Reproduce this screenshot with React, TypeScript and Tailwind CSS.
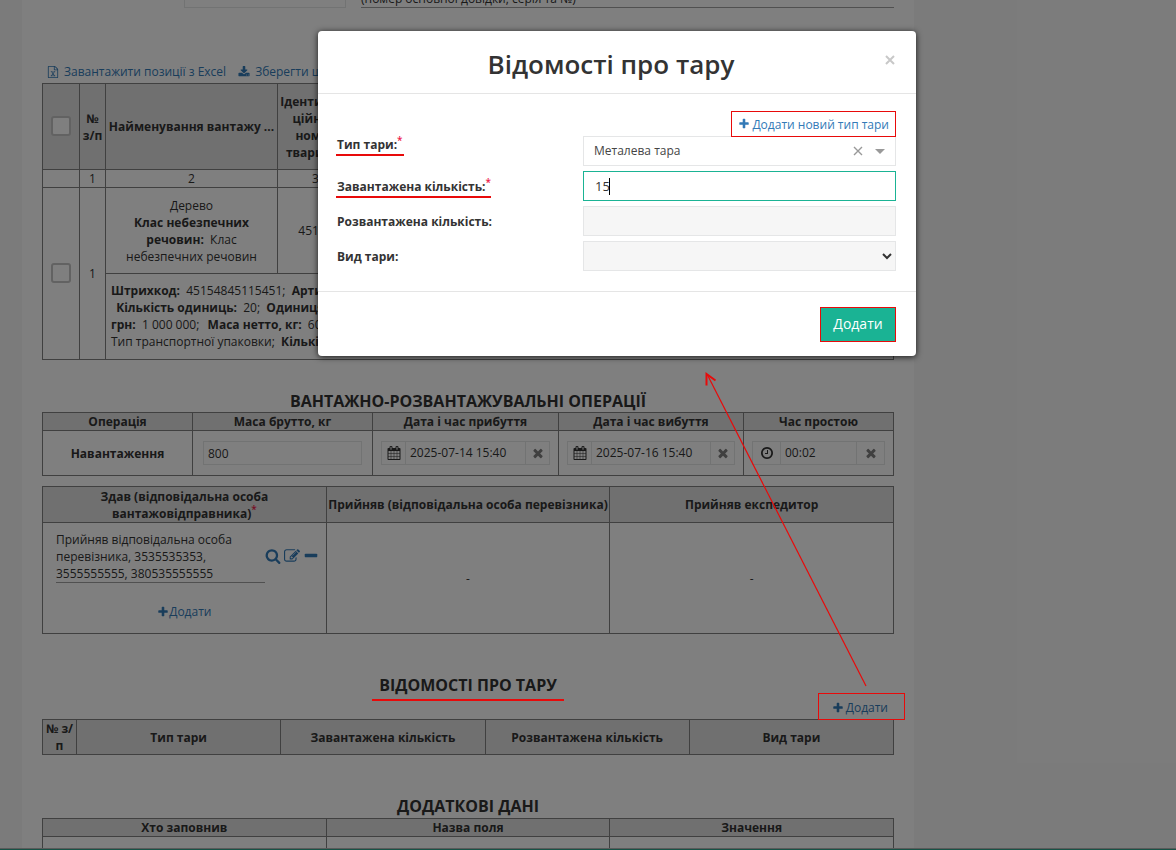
import React from "react";

const ICONS = {
  plus: "M1600 736v192q0 40-28 68t-68 28h-416v416q0 40-28 68t-68 28h-192q-40 0-68-28t-28-68v-416h-416q-40 0-68-28t-28-68v-192q0-40 28-68t68-28h416v-416q0-40 28-68t68-28h192q40 0 68 28t28 68v416h416q40 0 68 28t28 68z",
  minus: "M1600 736v192q0 40-28 68t-68 28h-1216q-40 0-68-28t-28-68v-192q0-40 28-68t68-28h1216q40 0 68 28t28 68z",
  search: "M1216 832q0-185-131.5-316.5t-316.5-131.5-316.5 131.5-131.5 316.5 131.5 316.5 316.5 131.5 316.5-131.5 131.5-316.5zm512 832q0 52-38 90t-90 38q-54 0-90-38l-343-342q-179 124-399 124-143 0-273.5-55.5t-225-150-150-225-55.5-273.5 55.5-273.5 150-225 225-150 273.5-55.5 273.5 55.5 225 150 150 225 55.5 273.5q0 220-124 399l343 343q37 37 37 90z",
  edit: "M888 1184l116-116-152-152-116 116v56h96v96h56zm440-720q-16-16-33 1l-350 350q-17 17-1 33t33-1l350-350q17-17 1-33zm80 594v190q0 119-84.5 203.5t-203.5 84.5h-832q-119 0-203.5-84.5t-84.5-203.5v-832q0-119 84.5-203.5t203.5-84.5h832q63 0 117 25 15 7 18 23 3 17-9 29l-49 49q-14 14-32 8-23-6-45-6h-832q-66 0-113 47t-47 113v832q0 66 47 113t113 47h832q66 0 113-47t47-113v-126q0-13 9-22l64-64q15-15 35-7t20 29zm-96-738l288 288-672 672h-288v-288zm444 132l-92 92-288-288 92-92q28-28 68-28t68 28l152 152q28 28 28 68t-28 68z",
  times: "M1490 1322q0 40-28 68l-136 136q-28 28-68 28t-68-28l-294-294-294 294q-28 28-68 28t-68-28l-136-136q-28-28-28-68t28-68l294-294-294-294q-28-28-28-68t28-68l136-136q28-28 68-28t68 28l294 294 294-294q28-28 68-28t68 28l136 136q28 28 28 68t-28 68l-294 294 294 294q28 28 28 68z",
  clock: "M1024 544v448q0 14-9 23t-23 9h-320q-14 0-23-9t-9-23v-64q0-14 9-23t23-9h224v-352q0-14 9-23t23-9h64q14 0 23 9t9 23zm416 352q0-148-73-273t-198-198-273-73-273 73-198 198-73 273 73 273 198 198 273 73 273-73 198-198 73-273zm224 0q0 209-103 385.5t-279.5 279.5-385.5 103-385.5-103-279.5-279.5-103-385.5 103-385.5 279.5-279.5 385.5-103 385.5 103 279.5 279.5 103 385.5z",
  calendar: "M192 1664h288v-288h-288v288zm352 0h320v-288h-320v288zm-352-352h288v-320h-288v320zm352 0h320v-320h-320v320zm-352-384h288v-288h-288v288zm736 736h320v-288h-320v288zm-384-736h320v-288h-320v288zm768 736h288v-288h-288v288zm-384-352h320v-320h-320v320zm-352-864v-288q0-13-9.5-22.5t-22.5-9.5h-64q-13 0-22.5 9.5t-9.5 22.5v288q0 13 9.5 22.5t22.5 9.5h64q13 0 22.5-9.5t9.5-22.5zm736 864h288v-320h-288v320zm-384-384h320v-288h-320v288zm384 0h288v-288h-288v288zm32-480v-288q0-13-9.5-22.5t-22.5-9.5h-64q-13 0-22.5 9.5t-9.5 22.5v288q0 13 9.5 22.5t22.5 9.5h64q13 0 22.5-9.5t9.5-22.5zm384-64v1280q0 52-38 90t-90 38h-1408q-52 0-90-38t-38-90v-1280q0-52 38-90t90-38h128v-96q0-66 47-113t113-47h64q66 0 113 47t47 113v96h384v-96q0-66 47-113t113-47h64q66 0 113 47t47 113v96h128q52 0 90 38t38 90z",
  download: "M1344 1344q0-26-19-45t-45-19-45 19-19 45 19 45 45 19 45-19 19-45zm256 0q0-26-19-45t-45-19-45 19-19 45 19 45 45 19 45-19 19-45zm128-224v320q0 40-28 68t-68 28h-1472q-40 0-68-28t-28-68v-320q0-40 28-68t68-28h465l135 136q58 56 136 56t136-56l136-136h464q40 0 68 28t28 68zm-325-569q17 41-14 70l-448 448q-18 19-45 19t-45-19l-448-448q-31-29-14-70 17-39 59-39h256v-448q0-26 19-45t45-19h256q26 0 45 19t19 45v448h256q42 0 59 39z",
  excel: "M1596 380q28 28 48 76t20 88v1152q0 40-28 68t-68 28h-1344q-40 0-68-28t-28-68v-1600q0-40 28-68t68-28h896q40 0 88 20t76 48zm-444-244v376h376q-10-29-22-41l-313-313q-12-12-41-22zm384 1528v-1024h-416q-40 0-68-28t-28-68v-416h-768v1536h1280zm-979-234v106h281v-106h-75l103-161q5-7 10-16.5t7.5-13.5 3.5-4h2q1 4 5 10 2 4 4.5 7.5t6 8 6.5 8.5l107 161h-76v106h291v-106h-68l-192-273 195-282h67v-107h-279v107h74l-103 159q-4 7-10 16.5t-9 13.5l-2 3h-2q-1-4-5-10-6-11-17-23l-106-159h76v-107h-290v107h68l189 272-194 283h-68z",
};

function Icon({ name, className }: { name: keyof typeof ICONS; className: string }) {
  return (
    <svg viewBox="0 0 1792 1792" fill="currentColor" aria-hidden="true" className={`shrink-0 ${className}`}>
      <path d={ICONS[name]} />
    </svg>
  );
}

const Star = () => <sup className="relative -top-[5px] align-baseline text-[10px] leading-none font-semibold text-[#ed1b4b]">*</sup>;

const cell = "border border-[#808080] p-0";
const head = "border border-[#808080] bg-[#e0e0e0] p-0 font-bold";

function PickerInput({ label, value, icon }: { label: string; value: string; icon: "calendar" | "clock" }) {
  return (
    <div className="ml-2 mr-2 flex h-6 border border-[#e5e6e7]">
      <span className={`flex items-center justify-center border-r border-[#e5e6e7] ${icon === "clock" ? "w-7" : "w-6"}`}>
        <Icon name={icon} className="size-[14px]" />
      </span>
      <input aria-label={label} defaultValue={value} className="min-w-0 flex-1 bg-transparent px-1 text-left text-xs outline-none" />
      <button type="button" aria-label={`Очистити: ${label}`} className={`flex items-center justify-center border-l border-[#e5e6e7] text-[#808080] ${icon === "clock" ? "w-7" : "w-6"}`}>
        <Icon name="times" className="size-[14px]" />
      </button>
    </div>
  );
}

function CargoTable() {
  return (
    <table className="w-full table-fixed border-collapse text-center">
      <colgroup>
        <col className="w-[37px]" />
        <col className="w-[26px]" />
        <col className="w-[172px]" />
        <col className="w-[76px]" />
        <col />
      </colgroup>
      <thead>
        <tr className="h-[86px]">
          <th className={`${head} pb-[2px]`}>
            <input type="checkbox" aria-label="Вибрати всі" className="block mx-auto size-5 appearance-none rounded-[3px] border-2 border-[#c4c4c4] bg-white" />
          </th>
          <th className={head}>№<br />з/п</th>
          <th className={head}>Найменування вантажу ...</th>
          <th className={head}>Ідентифіка<br />ційний<br />номер<br />тварини/</th>
          <th className={head} />
        </tr>
        <tr className="h-[18px]">
          <td className={cell} />
          <td className={cell}>1</td>
          <td className={cell}>2</td>
          <td className={cell}>3</td>
          <td className={cell} />
        </tr>
      </thead>
      <tbody>
        <tr className="h-[86px]">
          <td rowSpan={2} className={`${cell} pb-[2px]`}>
            <input type="checkbox" aria-label="Вибрати позицію 1" className="block mx-auto size-5 appearance-none rounded-[3px] border-2 border-[#c4c4c4] bg-white" />
          </td>
          <td rowSpan={2} className={cell}>1</td>
          <td className={`${cell} px-4`}>
            Дерево<br />
            <b>Клас небезпечних речовин:</b>&nbsp; Клас небезпечних речовин
          </td>
          <td className={cell}>45154</td>
          <td className={cell} />
        </tr>
        <tr className="h-[86px]">
          <td colSpan={3} className={`${cell} overflow-hidden pb-[2px] pl-[5px] text-left whitespace-nowrap`}>
            <b>Штрихкод:</b>&nbsp; 45154845115451;&nbsp; <b>Артикул:</b><br />
            &nbsp;<b className="ml-[2px]">Кількість одиниць:</b>&nbsp; 20;&nbsp; <b>Одиниця виміру:</b><br />
            <b>грн:</b>&nbsp; 1 000 000;&nbsp; <b className="ml-[2px]">Маса нетто, кг:</b>&nbsp; 600;<br />
            Тип транспортної упаковки;&nbsp; <b>Кількість місць:</b>
          </td>
        </tr>
      </tbody>
    </table>
  );
}

function OperationsTable() {
  return (
    <table className="w-full table-fixed border-collapse text-center">
      <colgroup>
        <col className="w-[150px]" />
        <col className="w-[180px]" />
        <col className="w-[186px]" />
        <col className="w-[185px]" />
        <col />
      </colgroup>
      <thead>
        <tr className="h-[18px]">
          <th className={head}>Операція</th>
          <th className={head}>Маса брутто, кг</th>
          <th className={head}>Дата і час прибуття</th>
          <th className={head}>Дата і час вибуття</th>
          <th className={head}>Час простою</th>
        </tr>
      </thead>
      <tbody>
        <tr className="h-[45px]">
          <th className={cell}>Навантаження</th>
          <td className={`${cell} px-[10px]`}>
            <input aria-label="Маса брутто, кг" defaultValue="800" className="block h-6 w-full border border-[#e5e6e7] bg-transparent px-1 text-xs" />
          </td>
          <td className={cell}><PickerInput label="Дата і час прибуття" value="2025-07-14 15:40" icon="calendar" /></td>
          <td className={cell}><PickerInput label="Дата і час вибуття" value="2025-07-16 15:40" icon="calendar" /></td>
          <td className={cell}><PickerInput label="Час простою" value="00:02" icon="clock" /></td>
        </tr>
      </tbody>
    </table>
  );
}

function PersonsTable() {
  return (
    <table className="mt-[10px] w-full table-fixed border-collapse text-center">
      <thead>
        <tr className="h-[36px]">
          <th className={`${head} px-10`}>Здав (відповідальна особа вантажовідправника)<Star /></th>
          <th className={`${head} whitespace-nowrap`}>Прийняв (відповідальна особа перевізника)</th>
          <th className={head}>Прийняв експедитор</th>
        </tr>
      </thead>
      <tbody>
        <tr className="h-[111px]">
          <td className={`${cell} align-top`}>
            <div className="flex items-center pt-2 pl-[13px] text-left">
              <p className="w-[209px] shrink-0 border-b border-[#a0a0a0]">
                Прийняв відповідальна особа<br />перевізника, 3535535353,<br />3555555555, 380535555555
              </p>
              <span className="flex items-center gap-[3px] pb-[2px] text-[#337ab7]">
                <button type="button" aria-label="Переглянути"><Icon name="search" className="size-4" /></button>
                <button type="button" aria-label="Редагувати"><Icon name="edit" className="size-4" /></button>
                <button type="button" aria-label="Видалити"><Icon name="minus" className="size-4" /></button>
              </span>
            </div>
            <a href="#person" className="mt-5 flex items-center justify-center text-[#337ab7]">
              <Icon name="plus" className="size-3" />Додати
            </a>
          </td>
          <td className={cell}>-</td>
          <td className={cell}>-</td>
        </tr>
      </tbody>
    </table>
  );
}

function Modal() {
  const field = "block h-[30px] w-full border border-[#e5e6e7] text-xs";
  return (
    <div role="dialog" aria-modal="true" aria-labelledby="modal-title" className="w-full max-w-[598px] rounded-[4px] bg-white shadow-[0_1px_6px_rgba(0,0,0,0.8)]">
      <header className="flex h-[63px] items-start border-b border-[#e5e5e5] pt-[15px] pr-5 pl-5">
        <h1 id="modal-title" className="flex-1 text-center text-[26px] leading-9 font-semibold">Відомості про тару</h1>
        <button type="button" aria-label="Закрити" className="mt-2 text-[#c8c8c8]">
          <svg viewBox="0 0 12 12" className="size-3" fill="none" stroke="currentColor" strokeWidth="2"><path d="M2 2l8 8M10 2l-8 8" /></svg>
        </button>
      </header>
      <form className="grid grid-cols-[minmax(0,1fr)_313px] gap-y-[5px] pt-[17px] pr-5 pb-5 pl-[19px]">
        <div className="flex items-end pb-[10px]">
          <label htmlFor="tare" className="-ml-px border-b-2 border-[#e80a0a] pr-px pl-px font-bold leading-[18px]">Тип тари:<Star /></label>
        </div>
        <div>
          <div className="flex justify-end">
            <a href="#new-type" className="relative z-10 flex h-[26px] items-center gap-[2px] border border-[#e80a0a] px-[6px] text-[#337ab7]">
              <Icon name="plus" className="size-3" />Додати новий тип тари
            </a>
          </div>
          <div className="-mt-px flex h-[30px] items-center border border-[#e5e6e7] pr-[10px] text-[#444]">
            <input id="tare" defaultValue="Металева тара" className="min-w-0 flex-1 bg-transparent pl-[10px] text-xs outline-none" />
            <button type="button" aria-label="Очистити" className="text-[#999]">
              <svg viewBox="0 0 10 10" className="size-[10px]" fill="none" stroke="currentColor" strokeWidth="1.4"><path d="M1 1l8 8M9 1l-8 8" /></svg>
            </button>
            <svg viewBox="0 0 10 5" className="ml-3 h-[5px] w-[10px] fill-[#999]" aria-hidden="true"><path d="M0 0h10l-5 5z" /></svg>
          </div>
        </div>
        <div className="flex items-end pb-[3px]">
          <label htmlFor="loaded" className="-ml-px border-b-2 border-[#e80a0a] pl-px font-bold leading-[18px]">Завантажена кількість:<Star /></label>
        </div>
        <div className="relative">
          <input id="loaded" defaultValue="15" className="block h-[30px] w-full border border-[#1ab394] pl-[11px] text-[13px] outline-none" />
          <span className="absolute top-[7px] left-[26px] h-[17px] w-px bg-black" />
        </div>
        <label htmlFor="unloaded" className="self-center font-bold">Розвантажена кількість:</label>
        <input id="unloaded" readOnly className={`${field} bg-[#f6f6f6]`} />
        <label htmlFor="kind" className="self-center font-bold">Вид тари:</label>
        <select id="kind" className={`${field} bg-[#f6f6f6]`}><option value="" /></select>
      </form>
      <footer className="flex justify-end border-t border-[#e5e5e5] px-5 pt-[15px] pb-[14px]">
        <button type="button" className="h-[35px] w-[76px] border border-[#e80a0a] bg-[#1ab394] pb-px text-sm font-medium text-white">Додати</button>
      </footer>
    </div>
  );
}

export default function App() {
  return (
    <div className="relative flex h-screen flex-col overflow-hidden bg-[#f7f7f7] font-['Open_Sans','Noto_Sans',sans-serif] text-xs leading-[17px] text-[#333]">
      <main className="min-h-0 flex-1 overflow-hidden pl-[22px]">
        <div className="min-h-full max-w-[892px] bg-white px-5">
          <div className="flex h-2 items-end overflow-hidden pl-[142px]">
            <input aria-label="Номер" className="h-7 w-[162px] shrink-0 border border-[#e5e6e7]" />
            <p className="ml-[15px] flex-1 border-b border-[#a0a0a0]">(номер основної довідки, серія та №)</p>
          </div>
          <div className="mt-[55px] flex h-5 gap-3 pl-[5px] text-[#337ab7]">
            <a href="#import" className="flex h-[17px] items-center gap-[5px]"><Icon name="excel" className="size-3" />Завантажити позиції з Excel</a>
            <a href="#export" className="flex h-[17px] items-center gap-[5px]"><Icon name="download" className="size-3" />Зберегти шаблон</a>
          </div>
          <CargoTable />
          <h2 className="mt-[31px] mb-px text-center text-base leading-5 font-bold">ВАНТАЖНО-РОЗВАНТАЖУВАЛЬНІ ОПЕРАЦІЇ</h2>
          <OperationsTable />
          <PersonsTable />
          <h2 className="mt-[41px] text-center text-base leading-5 font-bold">ВІДОМОСТІ ПРО ТАРУ</h2>
          <div className="flex h-6 items-end justify-end pr-[6px] pb-[3px]">
            <a href="#tare" className="flex items-center gap-[2px] text-[#337ab7]"><Icon name="plus" className="size-3" />Додати</a>
          </div>
          <table className="w-full table-fixed border-collapse text-center">
            <colgroup><col className="w-[34px]" /><col /><col /><col /><col /></colgroup>
            <thead>
              <tr className="h-[35px]">
                <th className={head}>№ з/<br />п</th>
                <th className={head}>Тип тари</th>
                <th className={head}>Завантажена кількість</th>
                <th className={head}>Розвантажена кількість</th>
                <th className={head}>Вид тари</th>
              </tr>
            </thead>
          </table>
          <h2 className="mt-[41px] mb-[2px] text-center text-base leading-5 font-bold">ДОДАТКОВІ ДАНІ</h2>
          <table className="w-full table-fixed border-collapse text-center">
            <thead>
              <tr className="h-[18px]">
                <th className={head}>Хто заповнив</th>
                <th className={head}>Назва поля</th>
                <th className={head}>Значення</th>
              </tr>
            </thead>
            <tbody>
              <tr className="h-10"><td className={cell} /><td className={cell} /><td className={cell} /></tr>
            </tbody>
          </table>
        </div>
      </main>
      <div className="h-[2px] border-t border-[#b4b4b4] bg-[#2fa68c]" />

      <div className="absolute inset-0 bg-black/50" />
      <svg className="absolute inset-0 size-full" fill="none" stroke="#e80a0a" aria-hidden="true">
        <path d="M372 700h192" strokeWidth="2" />
        <rect x="818.5" y="693.5" width="86" height="26" />
        <path d="M866 686L708 376" strokeWidth="1.2" />
        <path d="M706.5 385.5V374L715.5 380.5" strokeWidth="2" />
      </svg>
      <div className="absolute inset-0 pt-[31px] pl-[318px]">
        <Modal />
      </div>
    </div>
  );
}
